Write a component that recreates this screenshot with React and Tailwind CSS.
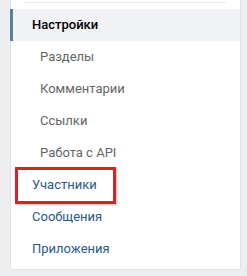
const items = [
  { label: 'Разделы', sub: true },
  { label: 'Комментарии', sub: true },
  { label: 'Ссылки', sub: true },
  { label: 'Работа с API', sub: true },
  { label: 'Участники', marked: true },
  { label: 'Сообщения' },
  { label: 'Приложения' },
];

export default function App() {
  return (
    <div className="w-[247px] h-[276px] bg-[#edeef0] overflow-hidden pl-[10px] pr-[6px] font-['Roboto',sans-serif] text-[13px]">
      <div className="w-[231px] h-[270px] bg-white border-x border-b border-[#dfe1e5] rounded-b-[2px] flex flex-col">
        {/* divider from the block above */}
        <div className="h-[9px] px-[14px] pt-[2px]">
          <div className="h-px bg-[#e7e8ec]" />
        </div>

        {/* active section */}
        <div className="h-[32px] flex items-center bg-[#f0f2f5] border-l-[3px] border-[#5b7fa6] -ml-px pl-[19px] text-black font-medium">
          Настройки
        </div>

        {items.map((item) => (
          <div
            key={item.label}
            className={
              item.sub
                ? 'relative h-[32px] flex items-center pl-[29px] text-[#656565]'
                : 'relative h-[32px] flex items-center pl-[21px] text-[#2a5885]'
            }
          >
            {item.label}
            {item.marked && (
              <div className="absolute left-[4px] top-[-2px] w-[101px] h-[37px] border-[3px] border-[#d3242a] shadow-[1px_1px_2px_rgba(0,0,0,0.3)]" />
            )}
          </div>
        ))}
      </div>
    </div>
  );
}
